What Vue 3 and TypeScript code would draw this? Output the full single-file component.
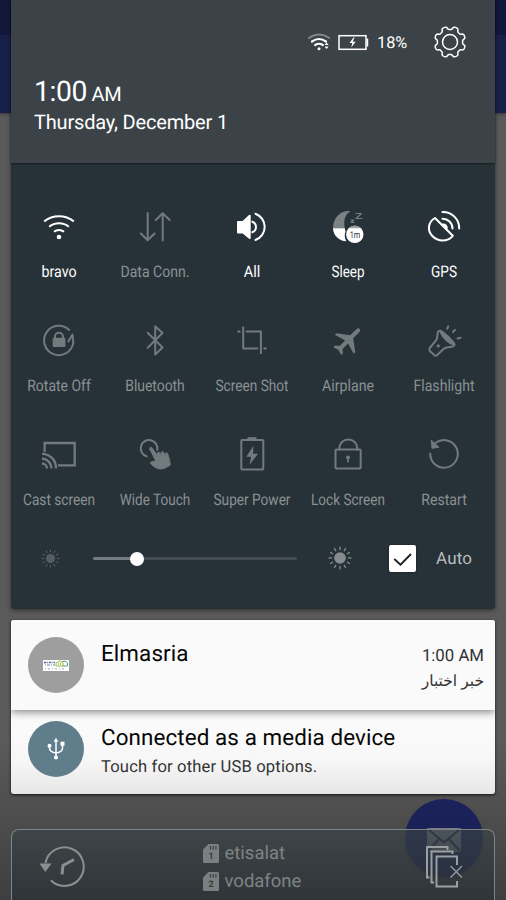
<script setup lang="ts">
interface Tile {
  id: string
  label: string
  width: number
  active?: boolean
}

const tiles: Tile[] = [
  { id: 'wifi', label: 'bravo', width: 35, active: true },
  { id: 'data', label: 'Data Conn.', width: 69 },
  { id: 'sound', label: 'All', width: 16.5, active: true },
  { id: 'sleep', label: 'Sleep', width: 33, active: true },
  { id: 'gps', label: 'GPS', width: 26, active: true },
  { id: 'rotate', label: 'Rotate Off', width: 63.5 },
  { id: 'bluetooth', label: 'Bluetooth', width: 59.5 },
  { id: 'crop', label: 'Screen Shot', width: 73 },
  { id: 'airplane', label: 'Airplane', width: 52 },
  { id: 'flashlight', label: 'Flashlight', width: 61 },
  { id: 'cast', label: 'Cast screen', width: 72 },
  { id: 'touch', label: 'Wide Touch', width: 70.5 },
  { id: 'power', label: 'Super Power', width: 77 },
  { id: 'lock', label: 'Lock Screen', width: 74 },
  { id: 'restart', label: 'Restart', width: 45.5 },
]

const rays = Array.from({ length: 12 }, (_, i) => i * 30)
const brightness = 21.5

const sims = [
  { slot: 1, name: 'etisalat' },
  { slot: 2, name: 'vodafone' },
]

function gearPath(): string {
  const points: string[] = []
  const steps = 144
  for (let i = 0; i < steps; i++) {
    const a = (i / steps) * Math.PI * 2
    const wave = Math.tanh(2.2 * Math.cos(8 * a + Math.PI)) / Math.tanh(2.2)
    const r = 14.1 + 1.5 * wave
    points.push(`${(17 + r * Math.cos(a)).toFixed(2)} ${(17 + r * Math.sin(a)).toFixed(2)}`)
  }
  return `M${points.join('L')}Z`
}
const gear = gearPath()
</script>

<template>
  <div class="screen">
    <div class="app-bar"><div class="status-strip"></div></div>
    <div class="fab">
      <svg width="34" height="24" viewBox="0 0 34 24">
        <rect width="34" height="24" fill="#9094a0" />
        <path d="M1 1L17 14.500L33 1M1 23L12.500 10.500M33 23L21.500 10.500" fill="none" stroke="#1c2456" stroke-width="2" />
      </svg>
    </div>
    <div class="fade"></div>

    <main class="shade">
      <section class="panel">
        <header class="header">
          <div class="status">
            <svg class="status-wifi" width="22" height="20" viewBox="0 0 22 20" fill="none" stroke-linecap="round">
              <path d="M1 6Q11 -1 21.500 6" stroke="#818789" stroke-width="2" />
              <path d="M4 9.500Q11 4.500 18 9.500M7.200 13Q11 10.500 14.800 13" stroke="#fff" stroke-width="2.200" />
              <circle cx="11" cy="16.800" r="1.500" fill="#fff" />
              <path d="M16.500 13L18.600 10.500L20.700 13ZM16.500 14.500L18.600 17L20.700 14.500Z" fill="#fff" />
            </svg>
            <svg class="status-battery" width="31" height="17" viewBox="0 0 31 17">
              <path d="M.500 1H28.500V4H31V13H28.500V16H.500Z" fill="#151e24" opacity=".45" />
              <rect x="1" y="1.700" width="27" height="13.600" fill="#3b4349" stroke="#fff" stroke-width="1.500" />
              <path d="M28.500 4.500H30.300V12.500H28.500Z" fill="#fff" />
              <path d="M15.500 3.500L11.500 9H14.300L13.300 13.500L17.500 7.800H14.700L16.500 3.500Z" fill="#fff" />
            </svg>
            <span class="percent">18%</span>
            <svg class="gear" width="34" height="34" viewBox="0 0 34 34" fill="none" stroke="#fff" stroke-width="1.500">
              <path :d="gear" />
              <circle cx="17" cy="17" r="7.500" />
            </svg>
          </div>
          <div class="clock">1:00<small> AM</small></div>
          <div class="date">Thursday, December 1</div>
        </header>

        <div class="tiles">
          <div v-for="tile in tiles" :key="tile.id" class="tile" :class="{ active: tile.active }">
            <svg class="tile-icon" viewBox="0 0 48 48" fill="none" stroke="currentColor" stroke-width="2" stroke-linecap="round" stroke-linejoin="round">
              <g v-if="tile.id === 'wifi'">
                <path d="M9.200 18.400A23.700 23.700 0 0 1 38.800 18.400M14.200 23.700A15.400 15.400 0 0 1 33.800 23.700M19 28.800A7.600 7.600 0 0 1 29 28.800" stroke-linecap="butt" />
                <circle cx="24" cy="34" r="2.300" fill="currentColor" stroke="none" />
              </g>
              <path v-else-if="tile.id === 'data'" d="M16.700 10V37M9.800 30.500L16.700 37.200L23.600 30.500M31.700 37.500V10.500M24.800 17L31.700 10.200L38.600 17" />
              <g v-else-if="tile.id === 'sound'">
                <path d="M10 19H15L21.700 12.700V35L15 29.500H10Z" fill="currentColor" />
                <path d="M24.300 18.700A5.600 5.600 0 0 1 24.300 29.200M27.500 10.700A14 14 0 0 1 27.500 37" />
              </g>
              <g v-else-if="tile.id === 'sleep'" stroke="none">
                <path d="M26.500 8.200C20 6.700 9 12 9 25.300H20.800C19.500 18 20.500 11.500 26.500 8.200Z" fill="#7c8284" />
                <path d="M9 25.300C9.300 33 15.500 38.200 22.300 38.200C20.500 35.500 20.300 31 21.500 28.500L20.800 25.300Z" fill="currentColor" />
                <circle cx="30.800" cy="31.400" r="8.700" fill="currentColor" />
                <path d="M24.500 25.300A8.700 8.700 0 0 1 37.100 25.300Z" fill="#9aa0a2" />
                <text x="30.900" y="35" text-anchor="middle" textLength="10.500" lengthAdjust="spacingAndGlyphs" class="sleep-time">1m</text>
                <path d="M32 10.500H37.500L32 15.500H38M27 17H29.800L27 19.500H30" fill="none" stroke="#747b7e" stroke-width="1.200" />
              </g>
              <g v-else-if="tile.id === 'gps'">
                <path d="M15 15L32.800 32.800C27.500 39 18 39 12.300 33C7 27.500 8 19 15 15Z" />
                <path d="M22.500 8.900A16.300 16.300 0 0 1 39.200 25.500M22.500 15.700A9.800 9.800 0 0 1 32.500 25.500" />
                <path d="M22 21.700A3.500 3.500 0 0 1 26.500 26.300" fill="currentColor" />
              </g>
              <g v-else-if="tile.id === 'rotate'">
                <path d="M34.200 13A14.700 14.700 0 1 0 38.300 25.800L37.500 17.500L33.300 24.500" />
                <rect x="17.700" y="20.800" width="12.700" height="9.200" rx="1" fill="currentColor" stroke="none" />
                <path d="M20 21V19.500A4 3.700 0 0 1 28 19.500V21" />
              </g>
              <path v-else-if="tile.id === 'bluetooth'" d="M16.700 15.800L31.500 30.500L24.200 37.500V9.300L31.500 16L16.700 30.700" />
              <path v-else-if="tile.id === 'crop'" d="M9.500 14.500H12.500M15.200 9.500V31.500H30M17.800 14.500H32.900V37M35.500 31.500H38.500" stroke-linecap="butt" />
              <path v-else-if="tile.id === 'airplane'" transform="translate(24.500 23) rotate(45) scale(1.400 1.500) translate(-11.500 -12)" d="M21 16v-1.500l-8-5.500V3c0-.8-.7-1.500-1.500-1.500S10 2.200 10 3V9l-8 5.500V16l8-2.200V19l-2.500 2V22.500l4-1 4 1V21L13 19v-5.200z" fill="currentColor" stroke="none" />
              <g v-else-if="tile.id === 'flashlight'">
                <path d="M18.300 14.200C16.500 17.500 18.500 20.500 15.800 23.700L9.800 31C8.800 32.200 9 33 9.800 33.900L14.500 38.200C15.300 39 16.300 39 17.300 38L23.800 31.800C26.500 29.500 30 31 33.500 29.200M18.300 14.200C19.700 13.200 21 13.700 22.300 14.700C27 18 30 21 33.800 25.800C34.800 27.200 34.700 28.500 33.500 29.200" />
                <path d="M20.500 15C23.500 21 28.500 26 34 27.500C30 21.500 26.500 18 20.500 15Z" fill="currentColor" />
                <path d="M27.300 11.700L28.200 9.300M33 15L35 12.800M37.500 21.500L40.500 20.700" />
                <circle cx="18.200" cy="28.900" r="1.600" fill="currentColor" stroke="none" />
              </g>
              <path v-else-if="tile.id === 'cast'" d="M9.600 21V12H39.700V34.300H23M7 32.500A5 5 0 0 1 12 37.500M7 27.500A10 10 0 0 1 16.500 37.500M7 22.800A14 14 0 0 1 21 37.500" stroke-width="2.300" stroke-linecap="butt" stroke-linejoin="miter" />
              <g v-else-if="tile.id === 'touch'">
                <path d="M15.700 25.300A8.300 8.300 0 1 1 26.200 19" />
                <path d="M19 18.500L24.800 30L20.500 30.800C18.800 31.500 19.500 33 20.500 33.500L24.500 36.700L29 38L33 37.500L39.200 34.200C38.700 28 37.700 25.500 36.500 22.500C35.500 21 34.500 21.300 34.800 23.500L35 25.500L32.300 20.900C31 19.800 29.800 20.800 30.500 22.500L31.500 25L28.300 21.500C27 20.800 26 21.700 26.500 23L27.200 25.500L21 17C20 15.700 18.300 16.500 19 18.500Z" fill="currentColor" stroke-width="1" />
              </g>
              <g v-else-if="tile.id === 'power'">
                <rect x="13.300" y="9" width="22" height="29.500" rx="1" />
                <path d="M19.500 6.200H28.500V9H19.500Z" fill="currentColor" stroke="none" />
                <path d="M25.500 14.800L18.300 25.700H23L21.500 34L30 22.700H25Z" fill="currentColor" stroke="none" />
              </g>
              <g v-else-if="tile.id === 'lock'">
                <rect x="11.500" y="18.500" width="25.200" height="19" rx="1" />
                <path d="M15.300 18.500V17A9 8.500 0 0 1 33.300 17V18.500" />
                <circle cx="24" cy="26.500" r="2" fill="currentColor" stroke="none" />
                <path d="M24 27V30.700" stroke-width="1.700" />
              </g>
              <g v-else>
                <path d="M10.200 22.500A13.800 13.800 0 1 0 15.500 12" />
                <path d="M11.300 9.500L12 17.300L18.700 16.300Z" fill="currentColor" stroke-width="1" />
              </g>
            </svg>
            <svg class="tile-label" viewBox="0 0 96 20">
              <text x="48" y="15.400" text-anchor="middle" :textLength="tile.width" lengthAdjust="spacingAndGlyphs">{{ tile.label }}</text>
            </svg>
          </div>
        </div>

        <div class="brightness">
          <svg class="sun dim" viewBox="0 0 24 24">
            <circle cx="12" cy="12" r="5.800" fill="currentColor" />
            <path v-for="r in rays" :key="r" d="M12 .500V4" :transform="`rotate(${r} 12 12)`" stroke="currentColor" stroke-width="1.300" />
          </svg>
          <div class="track">
            <div class="level" :style="{ width: brightness + '%' }"><i class="thumb"></i></div>
          </div>
          <svg class="sun" viewBox="0 0 24 24">
            <circle cx="12" cy="12" r="5.800" fill="currentColor" />
            <path v-for="r in rays" :key="r" d="M12 .500V4" :transform="`rotate(${r} 12 12)`" stroke="currentColor" stroke-width="1.300" />
          </svg>
          <div class="check">
            <svg width="27" height="27" viewBox="0 0 27 27"><path d="M5.300 14L11.500 19.700L22 9" fill="none" stroke="#182128" stroke-width="1.800" /></svg>
          </div>
          <span class="auto">Auto</span>
        </div>
      </section>

      <section class="notifications">
        <article class="note first">
          <div class="avatar">
            <svg width="26" height="11" viewBox="0 0 26 11">
              <rect width="26" height="11" fill="#fff" />
              <path d="M1 2.500H12" stroke="#45658a" stroke-width="1.500" stroke-dasharray="2 .8 1 1" />
              <path d="M2 5H12" stroke="#6984a2" stroke-width="1.200" stroke-dasharray="1 1 3 1" />
              <path d="M13 6V3L17 .800L20 3V6Z" fill="none" stroke="#a0bd3d" />
              <path d="M19 2L22 1L24.500 3V6H20" fill="none" stroke="#5a9896" />
              <path d="M15.500 5V3M17.500 5V3" stroke="#91b83b" stroke-width=".8" />
              <path d="M2 8.800H23" stroke="#8496ad" stroke-width=".8" stroke-dasharray="1 2 2 2" />
            </svg>
          </div>
          <h2 class="title elmasria">Elmasria</h2>
          <div class="meta"><span>1:00 AM</span><span class="arabic" lang="ar" dir="rtl">خبر اختبار</span></div>
        </article>
        <article class="note second">
          <div class="avatar usb">
            <svg width="20" height="24" viewBox="0 0 20 24" fill="none" stroke="#fff" stroke-width="1.500">
              <path d="M10 3V20M3.500 9V11Q3.500 15 10 16Q16.500 15 16.500 11V7" />
              <path d="M10 .800L7.700 4.800H12.300Z" fill="#fff" stroke="none" />
              <circle cx="10" cy="20.500" r="2.100" fill="#fff" stroke="none" />
              <circle cx="3.500" cy="8.700" r="2" fill="#fff" stroke="none" />
              <rect x="14.500" y="4.700" width="4" height="4" fill="#fff" stroke="none" />
            </svg>
          </div>
          <div class="text">
            <h2 class="title">Connected as a media device</h2>
            <p>Touch for other USB options.</p>
          </div>
        </article>
      </section>

      <footer class="carrier">
        <svg class="history" width="48" height="44" viewBox="0 0 48 44" fill="none" stroke="#8b8f90" stroke-width="2">
          <path d="M6.500 19A19.300 19.300 0 1 1 11.800 36.300" />
          <path d="M.500 19.500H12.500L6.300 28Z" fill="#8b8f90" stroke="none" />
          <path d="M23 30.500L24 21.500L35 15.500" stroke-width="3" />
        </svg>
        <div class="sims">
          <div v-for="sim in sims" :key="sim.slot" class="sim">
            <svg width="16" height="19" viewBox="0 0 16 19">
              <path d="M5.500 0H14.500Q16 0 16 1.500V17.500Q16 19 14.500 19H1.500Q0 19 0 17.500V5.500Z" fill="#7a7f80" />
              <path d="M7.500 2V5.500M10.200 2V5.500M12.900 2V5.500" stroke="#3a4043" stroke-width="1.200" />
              <text x="8" y="15" text-anchor="middle" class="slot">{{ sim.slot }}</text>
            </svg>
            <span>{{ sim.name }}</span>
          </div>
        </div>
        <svg class="clear" width="38" height="43" viewBox="0 0 38 43" fill="none" stroke="#9b9fa3" stroke-width="2">
          <path d="M4.500 32.500H2V2H22.500V5M9 37.500H6.500V6.500H27.500V9M32 20V11.500H11.500V41.500H32V36" />
          <path d="M25.500 21L37 32.500M37 21L25.500 32.500" stroke-width="1.300" />
        </svg>
      </footer>
    </main>
  </div>
</template>

<style>
html, body { margin: 0; overflow: hidden; }
</style>
<style scoped>
.screen {
  position: relative;
  width: 506px;
  height: 900px;
  overflow: hidden;
  background: #5a5a5a;
  font-family: Roboto, "Noto Sans", sans-serif;
  text-rendering: geometricPrecision;
}
.app-bar { height: 113px; background: #18204a; box-shadow: 0 1px 3px rgba(0, 0, 0, .4); }
.status-strip { height: 35px; background: #12183c; }
.fab {
  position: absolute;
  left: 405px;
  top: 799px;
  width: 78px;
  height: 78px;
  border-radius: 50%;
  background: #1e2768;
  display: flex;
  align-items: center;
  justify-content: center;
  box-shadow: 0 2px 3px rgba(0, 0, 0, .25);
}
.fab svg { margin-top: 3px; }
.fade { position: absolute; left: 0; right: 0; top: 740px; bottom: 0; background: linear-gradient(rgba(0, 0, 0, 0), rgba(0, 0, 0, .3)); }
.shade { position: absolute; inset: 0 11px 0 11px; display: flex; flex-direction: column; }
.panel {
  flex: none;
  height: 608.500px;
  background: #273238;
  border-radius: 0 0 3px 3px;
  box-shadow: 0 1px 4px rgba(0, 0, 0, .5);
}
.header {
  box-sizing: border-box;
  height: 163px;
  padding: 25px 28px 0 23px;
  background: #3b4349;
  color: #fff;
  box-shadow: 0 1px 2px rgba(0, 0, 0, .45);
}
.status { display: flex; align-items: center; justify-content: flex-end; height: 34px; }
.status-wifi { margin-right: 8px; }
.status-battery { margin-right: 8px; }
.percent { width: 32px; font-size: 16.300px; line-height: 34px; margin-right: 24px; padding-top: 2px; }
.clock { margin-top: 14px; height: 36px; font-size: 28.300px; line-height: 37px; letter-spacing: -.4px; }
.clock small { font-size: 20px; }
.date { margin-top: 1px; font-size: 20px; line-height: 24px; letter-spacing: -.18px; white-space: nowrap; }
.tiles {
  display: grid;
  grid-template-columns: repeat(5, 96.300px);
  grid-auto-rows: 114px;
  padding-top: 40px;
}
.tile { display: flex; flex-direction: column; align-items: center; color: #737a7d; }
.tile.active { color: #fff; }
.tile-icon { width: 48px; height: 48px; }
.tile-label { width: 96px; height: 20px; margin-top: 11px; overflow: visible; fill: #8a9194; font-size: 16px; }
.active .tile-label { fill: #fff; }
.sleep-time { font-size: 9.500px; fill: #273238; }
.brightness { display: flex; align-items: center; height: 28px; margin-top: -1px; padding-left: 30px; }
.sun { width: 24px; height: 24px; color: #858b8e; flex: none; }
.sun.dim { width: 19px; height: 19px; color: #535d62; }
.track { width: 204px; height: 3px; margin: 0 31px 0 33px; border-radius: 2px; background: #434d53; }
.level { position: relative; height: 3px; border-radius: 2px; background: #747b7e; }
.thumb { position: absolute; right: -7px; top: -5px; width: 14px; height: 14px; border-radius: 50%; background: #fff; }
.check { width: 27px; height: 27px; margin-left: 37px; border-radius: 2px; background: #fff; box-shadow: 0 0 2px #111a20; }
.check svg { display: block; }
.auto { margin-left: 20px; padding-top: 1px; font-size: 17px; color: #b9bdbf; letter-spacing: .2px; }
.notifications {
  flex: none;
  height: 174px;
  margin-top: 11.500px;
  border-radius: 3px;
  overflow: hidden;
  background: linear-gradient(#fafafa 65%, #f7f7f7 80%, #e7e7e7);
  box-shadow: 0 1px 3px rgba(0, 0, 0, .8);
}
.note { box-sizing: border-box; display: flex; align-items: flex-start; padding-left: 17px; color: #111; }
.note.first { position: relative; height: 90px; padding-top: 17px; background: #fafafa; box-shadow: 0 2px 8px rgba(0, 0, 0, .48); }
.note.second { padding-top: 11px; }
.avatar { flex: none; width: 56px; height: 56px; border-radius: 50%; background: #9e9e9e; display: flex; align-items: center; justify-content: center; }
.avatar.usb { background: #607d8b; }
.title { margin: 2px 0 0 17px; font-size: 22.400px; font-weight: 400; line-height: 30px; letter-spacing: .1px; white-space: nowrap; color: #060606; }
.title.elmasria { margin-top: 2px; }
.meta { display: flex; flex-direction: column; align-items: flex-end; margin: 7px 11px 0 auto; font-size: 16.800px; line-height: 24px; color: #333; }
.arabic { font-family: "Noto Sans", "DejaVu Sans", sans-serif; font-size: 15.500px; line-height: 24px; }
.text p { margin: 3px 0 0 17px; font-size: 16.600px; line-height: 24px; color: #333; letter-spacing: .15px; }
.carrier {
  box-sizing: border-box;
  flex: none;
  display: flex;
  align-items: flex-start;
  height: 82px;
  margin-top: 35px;
  border: 1.500px solid #808485;
  border-bottom: 0;
  border-radius: 8px 8px 0 0;
  background: linear-gradient(rgba(57, 66, 70, .7), rgba(41, 48, 52, .8));
}
.history { margin: 14px 0 0 27px; }
.sims { width: 150px; margin: 9px 0 0 116px; }
.sim { display: flex; align-items: center; height: 28px; gap: 5.500px; font-size: 18.500px; color: #7f8485; }
.slot { fill: #34393b; font-size: 9px; font-weight: 700; }
.clear { margin: 15px 0 0 72px; }
</style>
